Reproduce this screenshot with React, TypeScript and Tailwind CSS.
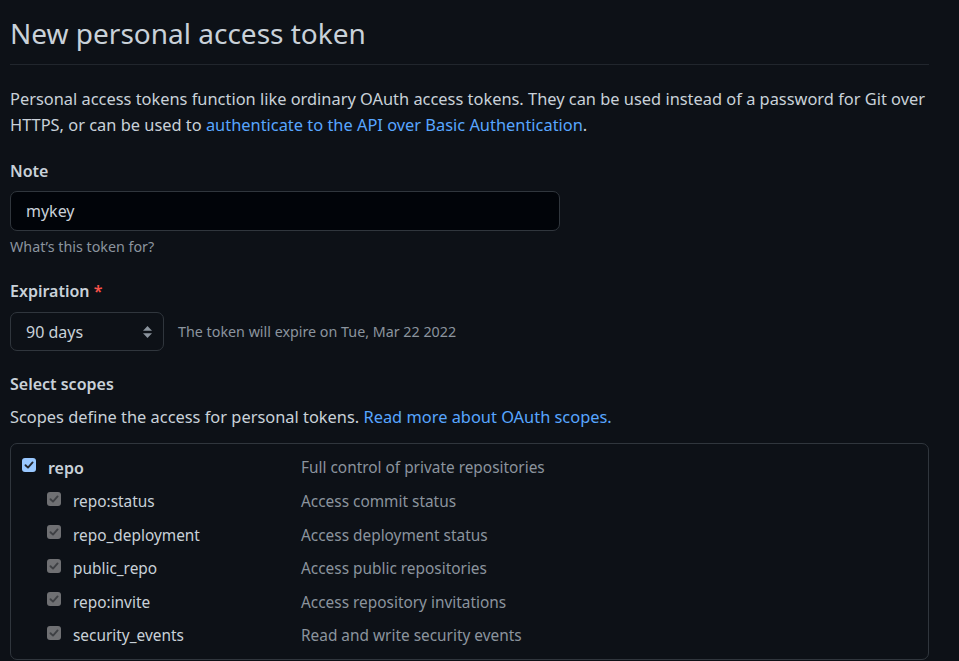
const scopes = [
  { name: "repo:status", desc: "Access commit status" },
  { name: "repo_deployment", desc: "Access deployment status" },
  { name: "public_repo", desc: "Access public repositories" },
  { name: "repo:invite", desc: "Access repository invitations" },
  { name: "security_events", desc: "Read and write security events" },
]

function Check({ disabled }: { disabled?: boolean }) {
  return (
    <span
      className={
        "flex h-[14px] w-[14px] shrink-0 items-center justify-center rounded-[3px] " +
        (disabled ? "bg-[#6f7073]" : "bg-[#99c8ff]")
      }
    >
      <svg width="10" height="10" viewBox="0 0 10 10" fill="none">
        <path
          d="M1.5 5.2 L4 7.6 L8.6 2.4"
          stroke={disabled ? "#3e4044" : "#22262c"}
          strokeWidth="1.9"
          strokeLinecap="round"
          strokeLinejoin="round"
        />
      </svg>
    </span>
  )
}

export default function App() {
  return (
    <div className="min-h-screen bg-[#0d1117] text-[#c9d1d9] font-['Noto_Sans',sans-serif] overflow-hidden">
      <div className="w-[919px] ml-[10px]">
        <h2 className="mt-[15px] pb-[11px] border-b border-[#21262d] text-[28px] leading-[37.5px] font-normal">
          New personal access token
        </h2>
        <p className="mt-[21px] text-[16.4px] leading-[26.25px]">
          Personal access tokens function like ordinary OAuth access tokens. They can be used instead of a password for Git over
          HTTPS, or can be used to <a className="text-[#58a6ff]">authenticate to the API over Basic Authentication</a>.
        </p>

        <label className="mt-[20px] block text-[16px] leading-[26px] font-semibold">Note</label>
        <div className="mt-[7px] flex h-[40px] w-[550px] items-center rounded-[7px] border border-[#30363d] bg-[#010409] px-[15px] text-[16px]">
          mykey
        </div>
        <p className="mt-[5px] text-[14.3px] leading-[22px] text-[#8b949e]">What’s this token for?</p>

        <label className="mt-[20px] block text-[16px] leading-[26px] font-semibold">
          Expiration <span className="text-[#f85149]">*</span>
        </label>
        <div className="mt-[8px] flex items-center gap-[14px]">
          <div className="flex h-[39px] w-[154px] items-center justify-between rounded-[7px] border border-[#30363d] bg-[#0d1117] pl-[15px] pr-[11px] text-[16px]">
            <span>90 days</span>
            <svg width="9" height="12" viewBox="0 0 9 12" fill="#8b949e">
              <path d="M4.5 0 L9 4.8 H0 Z" />
              <path d="M0 7.2 H9 L4.5 12 Z" />
            </svg>
          </div>
          <span className="text-[14.3px] text-[#8b949e]">The token will expire on Tue, Mar 22 2022</span>
        </div>

        <label className="mt-[20px] block text-[16px] leading-[26px] font-semibold">Select scopes</label>
        <p className="mt-[7px] text-[16.4px] leading-[26.25px]">
          Scopes define the access for personal tokens. <a className="text-[#58a6ff]">Read more about OAuth scopes.</a>
        </p>

        <div className="mt-[13px] rounded-[7px] border border-[#30363d] pt-[7px] pb-[6px] pl-[11px]">
          <div className="flex h-[33.6px] items-center">
            <div className="flex w-[279px] items-center gap-[12px]">
              <span className="-mt-[6px]">
                <Check />
              </span>
              <span className="text-[16px] font-semibold">repo</span>
            </div>
            <span className="text-[15.4px] text-[#8b949e]">Full control of private repositories</span>
          </div>
          {scopes.map((s) => (
            <div key={s.name} className="flex h-[33.6px] items-center">
              <div className="flex w-[279px] items-center gap-[12px] pl-[25px]">
                <span className="-mt-[6px]">
                  <Check disabled />
                </span>
                <span className="text-[15.4px]">{s.name}</span>
              </div>
              <span className="text-[15.4px] text-[#8b949e]">{s.desc}</span>
            </div>
          ))}
        </div>
      </div>
    </div>
  )
}
